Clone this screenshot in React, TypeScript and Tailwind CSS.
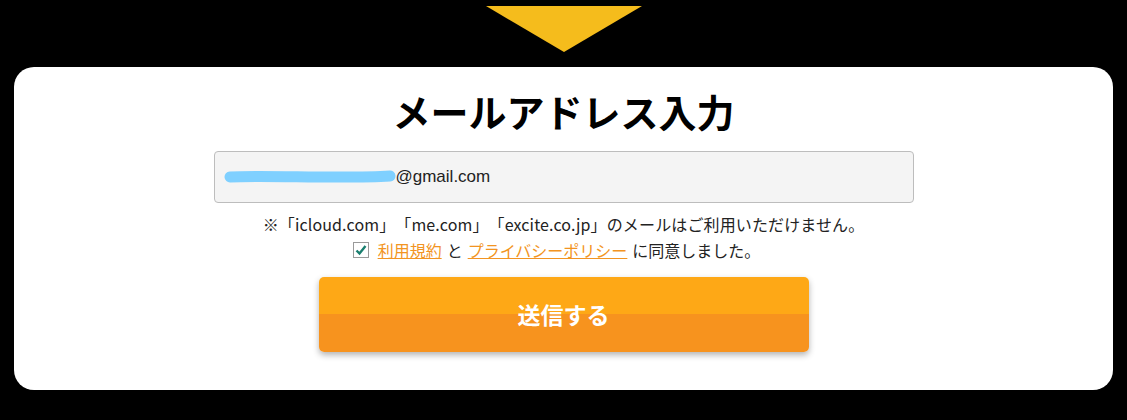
import React from "react";

export default function App() {
  const jp = { fontFamily: '"Noto Sans CJK JP", "Noto Sans", sans-serif' };
  return (
    <div className="w-[1127px] h-[420px] bg-black overflow-hidden flex flex-col items-center pt-[6px] [text-spacing-trim:space-all]" style={jp}>
      <svg width="156" height="46" viewBox="0 0 156 46" className="block shrink-0">
        <polygon points="0,0 156,0 78,46" fill="#f5bc1c" />
      </svg>
      <div className="mt-[15px] w-[1099px] h-[323px] bg-white rounded-[20px] flex flex-col items-center">
        <h1 className="mt-[18px] text-[38px] leading-[52px] font-bold text-black">メールアドレス入力</h1>
        <div className="mt-[14px] w-[700px] h-[52px] bg-[#f4f4f4] border border-[#bdbdbd] rounded-[4px] flex items-center pl-[9px]">
          <svg width="172" height="14" viewBox="0 0 172 14" className="shrink-0">
            <path d="M6 7 C 40 5, 120 9, 166 6" stroke="#7fd0ff" strokeWidth="11" strokeLinecap="round" fill="none" />
          </svg>
          <span className="text-[17px] text-[#222]" style={{ fontFamily: '"Liberation Sans", Arial, sans-serif' }}>@gmail.com</span>
        </div>
        <p className="mt-[9px] text-[16px] leading-[24px] tracking-[0.13px] text-[#222]">
          ※「icloud.com」「me.com」「excite.co.jp」のメールはご利用いただけません。
        </p>
        <div className="mt-[2px] pr-[14px] flex items-center text-[16px] leading-[24px] text-[#222]">
          <span className="w-[16px] h-[16px] border border-[#9a9a9a] bg-white flex items-center justify-center mr-[9px]">
            <svg width="12" height="12" viewBox="0 0 12 12">
              <path d="M1.5 6.5 L4.5 9.5 L10.5 2" stroke="#1a7f6f" strokeWidth="2.4" fill="none" />
            </svg>
          </span>
          <a className="text-[#f29422] underline">利用規約</a>
          <span className="mx-[5px]">と</span>
          <a className="text-[#f29422] underline">プライバシーポリシー</a>
          <span className="ml-[5px]">に同意しました。</span>
        </div>
        <button className="mt-[15px] w-[490px] h-[75px] rounded-[5px] overflow-hidden flex flex-col shadow-[0_3px_6px_rgba(0,0,0,0.3)] relative">
          <div className="h-[37px] bg-[#fea816]" />
          <div className="flex-1 bg-[#f7931e]" />
          <span className="absolute inset-0 flex items-center justify-center text-white text-[23px] font-bold">送信する</span>
        </button>
      </div>
    </div>
  );
}
